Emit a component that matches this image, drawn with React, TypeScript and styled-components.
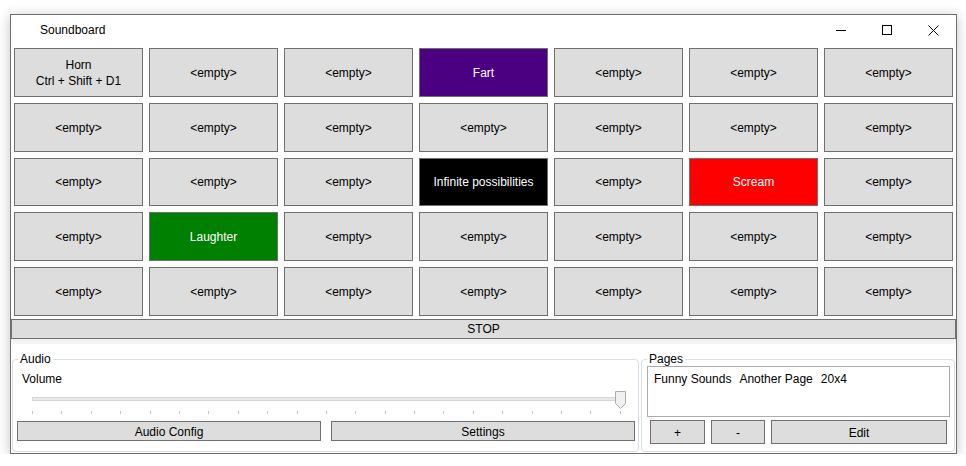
import React from "react";
import styled, { createGlobalStyle } from "styled-components";

const GlobalStyle = createGlobalStyle`
  * {
    box-sizing: border-box;
  }
  body {
    margin: 0;
    background: #ffffff;
    font-family: "Liberation Sans", Arial, sans-serif;
    font-size: 12px;
    color: #000;
  }
`;

const Window = styled.div`
  margin: 14px 0 0 10px;
  width: 947px;
  height: 440px;
  border: 1px solid #6f6f6f;
  background: #fff;
  box-shadow: 0 2px 12px rgba(0, 0, 0, 0.24);
  display: flex;
  flex-direction: column;
`;

const TitleBar = styled.div`
  display: flex;
  align-items: center;
  height: 30px;
  flex-shrink: 0;
`;

const Title = styled.div`
  flex: 1;
  padding-left: 29px;
  font-size: 12px;
  line-height: 16px;
`;

const CaptionButton = styled.div`
  width: 46px;
  height: 30px;
  display: flex;
  align-items: center;
  justify-content: center;
`;

const SoundGrid = styled.div`
  display: grid;
  grid-template-columns: repeat(7, 1fr);
  grid-template-rows: repeat(5, 1fr);
  height: 274px;
  flex-shrink: 0;
`;

const SoundButton = styled.div<{ $bg?: string; $fg?: string }>`
  margin: 3px;
  display: flex;
  flex-direction: column;
  align-items: center;
  justify-content: center;
  padding-top: 1px;
  background: ${p => p.$bg ?? "#dddddd"};
  color: ${p => p.$fg ?? "#000"};
  border: 1px solid #707070;
  line-height: 16px;
  text-align: center;
`;

const StopButton = styled.div`
  height: 20px;
  flex-shrink: 0;
  background: #dddddd;
  border: 1px solid #707070;
  display: flex;
  align-items: center;
  justify-content: center;
  line-height: 16px;
`;

const Splitter = styled.div`
  height: 5px;
  flex-shrink: 0;
  background: linear-gradient(#f0f0f0, #f7f7f7);
`;

const BottomArea = styled.div`
  flex: 1;
  display: grid;
  grid-template-columns: 627px 314px;
  column-gap: 2px;
  padding: 8px 1px 1px 1px;
  align-items: start;
`;

const Group = styled.fieldset`
  margin: 0;
  padding: 0;
  min-width: 0;
  border: 1px solid #d5dfe5;
  border-radius: 4px;
`;

const Legend = styled.legend`
  margin-left: 5px;
  padding: 0 2px;
  line-height: 14px;
  font-size: 12px;
`;

const AudioBody = styled.div`
  padding: 5px 3px 10px 4px;
`;

const FieldLabel = styled.div`
  height: 16px;
  line-height: 16px;
  padding-left: 5px;
`;

const Slider = styled.div`
  position: relative;
  height: 30px;
  margin: 0 14px 0 15px;
`;

const Track = styled.div`
  position: absolute;
  left: 0;
  right: 0;
  top: 10px;
  height: 4px;
  background: #e7eaea;
  border: 1px solid #d6d6d6;
`;

const Thumb = styled.svg`
  position: absolute;
  right: -5px;
  top: 4px;
`;

const Ticks = styled.div`
  position: absolute;
  left: 0;
  right: 0;
  top: 24px;
  display: flex;
  justify-content: space-between;
`;

const Tick = styled.div`
  width: 1px;
  height: 3px;
  background: #c4c4c4;
`;

const ButtonRow = styled.div<{ $gap: number; $top: number }>`
  display: flex;
  gap: ${p => p.$gap}px;
  margin-top: ${p => p.$top}px;
`;

const PlainButton = styled.div<{ $w?: number; $h: number }>`
  ${p => (p.$w ? `width: ${p.$w}px;` : "flex: 1;")}
  height: ${p => p.$h}px;
  padding-top: 1px;
  background: #dddddd;
  border: 1px solid #707070;
  display: flex;
  align-items: center;
  justify-content: center;
`;

const PagesBody = styled.div`
  padding: 0 7px 7px 0;
`;

const PageList = styled.div`
  height: 51px;
  margin: 0 -3px 0 5px;
  border: 1px solid #acacac;
  padding: 4px 6px;
  display: flex;
  gap: 8px;
  line-height: 16px;
`;

const PageButtons = styled(ButtonRow)`
  padding-left: 8px;
`;

type Sound = { label: string[]; bg?: string; fg?: string };

const special: Record<number, Sound> = {
  0: { label: ["Horn", "Ctrl + Shift + D1"] },
  3: { label: ["Fart"], bg: "#4b0082", fg: "#fff" },
  17: { label: ["Infinite possibilities"], bg: "#000", fg: "#fff" },
  19: { label: ["Scream"], bg: "#ff0000", fg: "#fff" },
  22: { label: ["Laughter"], bg: "#008000", fg: "#fff" },
};

const sounds: Sound[] = Array.from(
  { length: 35 },
  (_, i) => special[i] ?? { label: ["<empty>"] }
);

const App = () => (
  <>
    <GlobalStyle />
    <Window>
      <TitleBar>
        <Title>Soundboard</Title>
        <CaptionButton>
          <svg width="10" height="10" viewBox="0 0 10 10">
            <path d="M0 5.5h10" stroke="#000" strokeWidth="1" />
          </svg>
        </CaptionButton>
        <CaptionButton>
          <svg width="10" height="10" viewBox="0 0 10 10">
            <rect x="0.5" y="0.5" width="9" height="9" fill="none" stroke="#000" />
          </svg>
        </CaptionButton>
        <CaptionButton>
          <svg width="11" height="11" viewBox="0 0 11 11">
            <path d="M0.5 0.5l10 10M10.5 0.5l-10 10" stroke="#000" strokeWidth="1" />
          </svg>
        </CaptionButton>
      </TitleBar>

      <SoundGrid>
        {sounds.map((s, i) => (
          <SoundButton key={i} $bg={s.bg} $fg={s.fg}>
            {s.label.map(line => (
              <div key={line}>{line}</div>
            ))}
          </SoundButton>
        ))}
      </SoundGrid>

      <StopButton>STOP</StopButton>
      <Splitter />

      <BottomArea>
        <Group>
          <Legend>Audio</Legend>
          <AudioBody>
            <FieldLabel>Volume</FieldLabel>
            <Slider>
              <Track />
              <Ticks>
                {Array.from({ length: 21 }, (_, i) => (
                  <Tick key={i} />
                ))}
              </Ticks>
              <Thumb width="11" height="18" viewBox="0 0 11 18">
                <path
                  d="M0.5 0.5h10v12l-5 5l-5 -5z"
                  fill="#f0f0f0"
                  stroke="#acacac"
                />
              </Thumb>
            </Slider>
            <ButtonRow $gap={10} $top={4}>
              <PlainButton $h={20}>Audio Config</PlainButton>
              <PlainButton $h={20}>Settings</PlainButton>
            </ButtonRow>
          </AudioBody>
        </Group>

        <Group>
          <Legend>Pages</Legend>
          <PagesBody>
            <PageList>
              <span>Funny Sounds</span>
              <span>Another Page</span>
              <span>20x4</span>
            </PageList>
            <PageButtons $gap={6} $top={3}>
              <PlainButton $w={55} $h={24}>+</PlainButton>
              <PlainButton $w={54} $h={24}>-</PlainButton>
              <PlainButton $h={24}>Edit</PlainButton>
            </PageButtons>
          </PagesBody>
        </Group>
      </BottomArea>
    </Window>
  </>
);

export default App;
